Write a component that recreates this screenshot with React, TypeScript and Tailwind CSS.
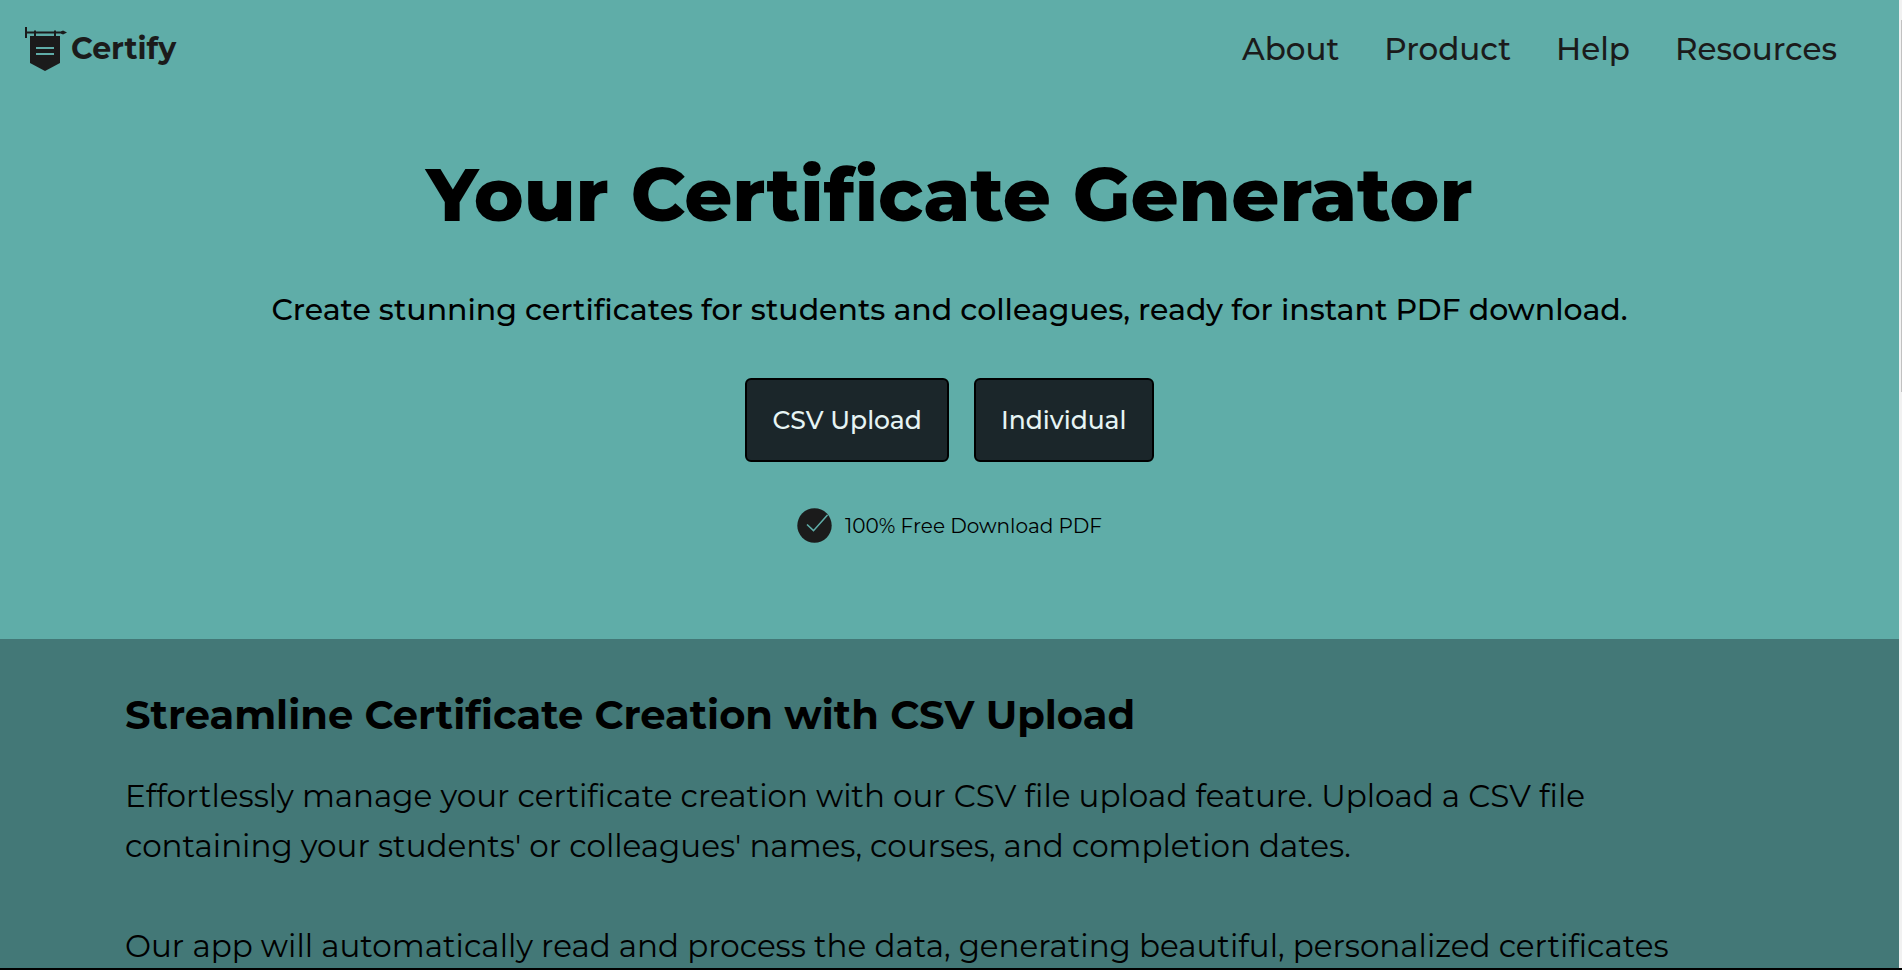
import React from "react";

const navLinks = ["About", "Product", "Help", "Resources"];

function BannerLogo() {
  return (
    <svg width="42" height="46" viewBox="0 0 42 46" fill="#1b1b1b" aria-hidden="true">
      <path d="M0 1h2v11H0zM2 5.5h35v2H2z" />
      <path d="M36 5.5l2-1 4 2-4 2-2-1z" />
      <path d="M5 10h4V4.500h2V10h18V4.500h2V10h4v27l-15 8-15-8z" />
      <path d="M11 22h18M11 28h18" stroke="#5fada8" strokeWidth="2" />
    </svg>
  );
}

function CheckBadge() {
  return (
    <svg width="35" height="35" viewBox="0 0 35 35" fill="none" aria-hidden="true">
      <circle cx="17.5" cy="17.5" r="17.2" fill="#1b1b1b" />
      <path d="M10 16.5l6.5 6.2L30.5 7" stroke="#5fada8" strokeWidth="1.6" />
    </svg>
  );
}

function ActionButton({ label }: { label: string }) {
  return (
    <button className="rounded-md border-2 border-black bg-[#1b262a] px-[25px] py-5 text-[25px] leading-[40px] font-medium text-[#e6f4f4]">
      {label}
    </button>
  );
}

export default function App() {
  return (
    <div className="flex h-screen flex-col border-b-2 border-black font-['Montserrat','Inter',sans-serif] text-black">
      <div className="flex min-h-0 flex-1">
        <div className="flex min-w-0 flex-1 flex-col overflow-hidden bg-[#437877]">
          <div className="bg-[#5fada8] pb-24">
            <header className="flex items-center justify-between py-6 pr-[62px] pl-[25px] text-[#1b1b1b]">
              <a href="#" className="flex items-center gap-1 text-[30px] leading-[50px] font-bold">
                <BannerLogo />
                Certify
              </a>
              <nav className="flex gap-[45px] text-[31px] leading-[50px] font-medium">
                {navLinks.map((label) => (
                  <a key={label} href="#">{label}</a>
                ))}
              </nav>
            </header>
            <main className="flex flex-col items-center">
              <h1 className="mt-12 text-[75px] leading-[96px] font-extrabold">Your Certificate Generator</h1>
              <p className="mt-11 text-[30px] leading-[48px] font-medium">
                Create stunning certificates for students and colleagues, ready for instant PDF download.
              </p>
              <div className="mt-11 flex gap-[25px]">
                <ActionButton label="CSV Upload" />
                <ActionButton label="Individual" />
              </div>
              <div className="mt-[46px] flex items-center gap-[13px] text-[20px] leading-[32px]">
                <CheckBadge />
                100% Free Download PDF
              </div>
            </main>
          </div>
          <section className="px-[125px] pt-12">
            <h2 className="text-[40px] leading-[56px] font-bold">Streamline Certificate Creation with CSV Upload</h2>
            <div className="mt-7 flex flex-col gap-[50px] text-[31px] leading-[50px] font-normal">
              <p>
                Effortlessly manage your certificate creation with our CSV file upload feature. Upload a CSV file
                <br />
                containing your students' or colleagues' names, courses, and completion dates.
              </p>
              <p>Our app will automatically read and process the data, generating beautiful, personalized certificates</p>
            </div>
          </section>
        </div>
        {/* Scroll track */}
        <div className="flex w-[3px] justify-end bg-[#f1f1f1] pt-5">
          <div className="h-[372px] w-px bg-[#c1c1c1]" />
        </div>
      </div>
    </div>
  );
}
